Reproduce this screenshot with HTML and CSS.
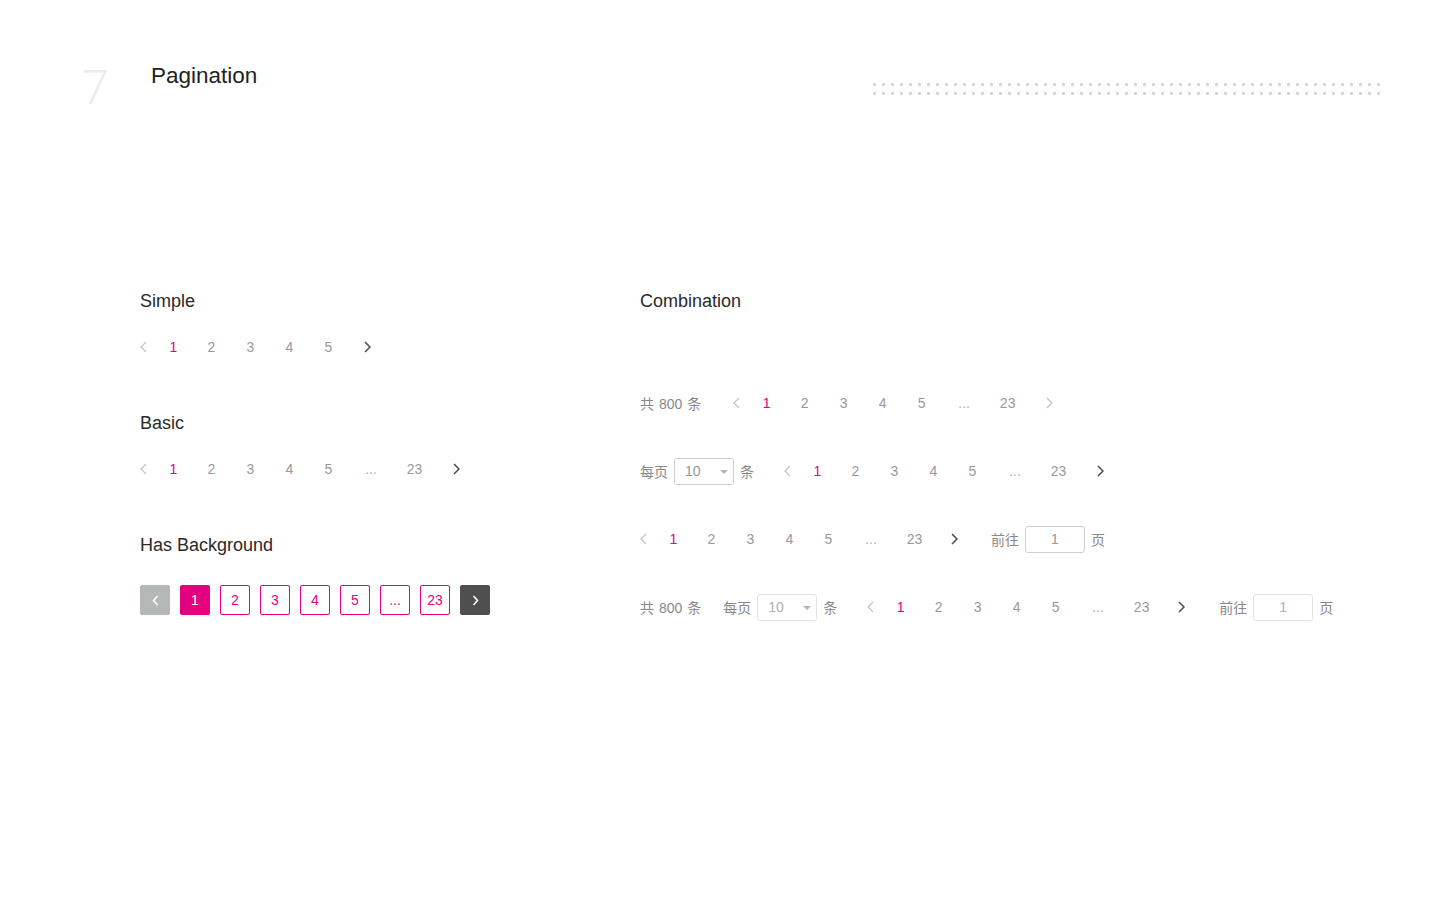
FILE: index.html
```html
<!DOCTYPE html>
<html lang="zh-CN">
<head>
<meta charset="utf-8">
<title>Pagination</title>
<link rel="stylesheet" href="styles.css">
</head>
<body>
<header class="header">
  <div class="chapter">7</div>
  <h1 class="page-title">Pagination</h1>
  <div class="dots"></div>
</header>

<main class="content">
  <section class="col">
    <div class="block">
      <h2 class="section-title">Simple</h2>
      <div class="pager pager-simple">
        <span class="pg-arrow prev"><svg width="7" height="12" viewBox="0 0 7 12"><path d="M6 1 1 6l5 5" fill="none" stroke="currentColor" stroke-width="1.2"/></svg></span>
        <span class="pg-item active">1</span>
        <span class="pg-item">2</span>
        <span class="pg-item">3</span>
        <span class="pg-item">4</span>
        <span class="pg-item">5</span>
        <span class="pg-arrow next"><svg width="7" height="12" viewBox="0 0 7 12"><path d="M1 1l5 5-5 5" fill="none" stroke="currentColor" stroke-width="1.5"/></svg></span>
      </div>
    </div>

    <div class="block">
      <h2 class="section-title">Basic</h2>
      <div class="pager">
        <span class="pg-arrow prev"><svg width="7" height="12" viewBox="0 0 7 12"><path d="M6 1 1 6l5 5" fill="none" stroke="currentColor" stroke-width="1.2"/></svg></span>
        <span class="pg-item active">1</span>
        <span class="pg-item">2</span>
        <span class="pg-item">3</span>
        <span class="pg-item">4</span>
        <span class="pg-item">5</span>
        <span class="pg-item more">...</span>
        <span class="pg-item wide">23</span>
        <span class="pg-arrow next next-wide"><svg width="7" height="12" viewBox="0 0 7 12"><path d="M1 1l5 5-5 5" fill="none" stroke="currentColor" stroke-width="1.5"/></svg></span>
      </div>
    </div>

    <div class="block">
      <h2 class="section-title">Has Background</h2>
      <div class="bg-pager">
        <span class="bg-item bg-prev"><svg width="7" height="11" viewBox="0 0 7 11"><path d="M5.5 1 1.5 5.5l4 4.5" fill="none" stroke="currentColor" stroke-width="1.6"/></svg></span>
        <span class="bg-item bg-active">1</span>
        <span class="bg-item">2</span>
        <span class="bg-item">3</span>
        <span class="bg-item">4</span>
        <span class="bg-item">5</span>
        <span class="bg-item">...</span>
        <span class="bg-item">23</span>
        <span class="bg-item bg-next"><svg width="7" height="11" viewBox="0 0 7 11"><path d="M1.5 1l4 4.5-4 4.5" fill="none" stroke="currentColor" stroke-width="1.6"/></svg></span>
      </div>
    </div>
  </section>

  <section class="col col-right">
    <h2 class="section-title">Combination</h2>

    <div class="combo combo-first">
      <span class="label total">共 800 条</span>
      <div class="pager">
        <span class="pg-arrow prev"><svg width="7" height="12" viewBox="0 0 7 12"><path d="M6 1 1 6l5 5" fill="none" stroke="currentColor" stroke-width="1.2"/></svg></span>
        <span class="pg-item active">1</span>
        <span class="pg-item">2</span>
        <span class="pg-item">3</span>
        <span class="pg-item">4</span>
        <span class="pg-item">5</span>
        <span class="pg-item more">...</span>
        <span class="pg-item wide">23</span>
        <span class="pg-arrow next next-wide next-light"><svg width="7" height="12" viewBox="0 0 7 12"><path d="M1 1l5 5-5 5" fill="none" stroke="currentColor" stroke-width="1.2"/></svg></span>
      </div>
    </div>

    <div class="combo">
      <span class="label">每页</span>
      <span class="select"><span class="select-value">10</span><span class="caret"></span></span>
      <span class="label unit">条</span>
      <div class="pager">
        <span class="pg-arrow prev"><svg width="7" height="12" viewBox="0 0 7 12"><path d="M6 1 1 6l5 5" fill="none" stroke="currentColor" stroke-width="1.2"/></svg></span>
        <span class="pg-item active">1</span>
        <span class="pg-item">2</span>
        <span class="pg-item">3</span>
        <span class="pg-item">4</span>
        <span class="pg-item">5</span>
        <span class="pg-item more">...</span>
        <span class="pg-item wide">23</span>
        <span class="pg-arrow next next-wide"><svg width="7" height="12" viewBox="0 0 7 12"><path d="M1 1l5 5-5 5" fill="none" stroke="currentColor" stroke-width="1.5"/></svg></span>
      </div>
    </div>

    <div class="combo">
      <div class="pager">
        <span class="pg-arrow prev"><svg width="7" height="12" viewBox="0 0 7 12"><path d="M6 1 1 6l5 5" fill="none" stroke="currentColor" stroke-width="1.2"/></svg></span>
        <span class="pg-item active">1</span>
        <span class="pg-item">2</span>
        <span class="pg-item">3</span>
        <span class="pg-item">4</span>
        <span class="pg-item">5</span>
        <span class="pg-item more">...</span>
        <span class="pg-item wide">23</span>
        <span class="pg-arrow next"><svg width="7" height="12" viewBox="0 0 7 12"><path d="M1 1l5 5-5 5" fill="none" stroke="currentColor" stroke-width="1.5"/></svg></span>
      </div>
      <span class="label goto">前往</span>
      <span class="jump">1</span>
      <span class="label page-unit">页</span>
    </div>

    <div class="combo">
      <span class="label total total-full">共 800 条</span>
      <span class="label">每页</span>
      <span class="select select-light"><span class="select-value">10</span><span class="caret"></span></span>
      <span class="label unit">条</span>
      <div class="pager">
        <span class="pg-arrow prev"><svg width="7" height="12" viewBox="0 0 7 12"><path d="M6 1 1 6l5 5" fill="none" stroke="currentColor" stroke-width="1.2"/></svg></span>
        <span class="pg-item active">1</span>
        <span class="pg-item">2</span>
        <span class="pg-item">3</span>
        <span class="pg-item">4</span>
        <span class="pg-item">5</span>
        <span class="pg-item more">...</span>
        <span class="pg-item wide">23</span>
        <span class="pg-arrow next"><svg width="7" height="12" viewBox="0 0 7 12"><path d="M1 1l5 5-5 5" fill="none" stroke="currentColor" stroke-width="1.5"/></svg></span>
      </div>
      <span class="label goto goto-wide">前往</span>
      <span class="jump jump-light">1</span>
      <span class="label page-unit">页</span>
    </div>
  </section>
</main>
</body>
</html>
```

FILE: styles.css
```css
* {
  box-sizing: border-box;
}

html, body {
  margin: 0;
  padding: 0;
  background: #ffffff;
}

body {
  font-family: "Liberation Sans", "Noto Sans CJK SC", sans-serif;
  color: #222222;
  width: 1440px;
  height: 900px;
  overflow: hidden;
}

/* Header */
.header {
  display: flex;
  align-items: flex-start;
  height: 120px;
  padding: 0 57px 0 80px;
}

.chapter {
  width: 71px;
  margin-top: 64px;
  padding-left: 2px;
  font-family: Roboto, "Liberation Sans", sans-serif;
  font-weight: 300;
  font-size: 48px;
  line-height: 48px;
  color: #ececec;
}

.page-title {
  margin: 61px 0 0 0;
  font-weight: 400;
  font-size: 22.5px;
  line-height: 30px;
  color: #222222;
}

.dots {
  margin-left: auto;
  margin-top: 80px;
  width: 513px;
  height: 18px;
  background-image: radial-gradient(circle at 4.5px 4.5px, #d4d4d4 1.3px, rgba(255,255,255,0) 1.7px);
  background-size: 9px 9px;
}

/* Content */
.content {
  display: grid;
  grid-template-columns: 500px 1fr;
  padding: 169px 0 0 140px;
}

.section-title {
  margin: 0;
  font-weight: 400;
  font-size: 18px;
  line-height: 24px;
  color: #2a2a2a;
}

.block {
  display: flex;
  flex-direction: column;
}

.block + .block {
  margin-top: 52px;
}

.block .pager {
  margin-top: 22px;
  height: 24px;
}

.block .bg-pager {
  margin-top: 28px;
}

/* Text pager */
.pager {
  display: flex;
  align-items: center;
  height: 28px;
  font-size: 14px;
  color: #999999;
}

.pg-arrow {
  display: flex;
  align-items: center;
}

.pg-arrow svg {
  display: block;
}

.prev {
  width: 15px;
  justify-content: flex-start;
  color: #c2c2c2;
}

.next {
  width: 39px;
  justify-content: center;
  color: #4a4a4a;
}

.next-wide {
  width: 43px;
}

.next-light {
  color: #c2c2c2;
}

.pg-item {
  width: 39px;
  text-align: center;
  line-height: 20px;
}

.prev + .pg-item {
  width: 37px;
}

.pg-item.active {
  color: #e4007f;
}

.pg-item.more {
  width: 46px;
  color: #b0b0b0;
}

.pg-item.wide {
  width: 41px;
}

/* Background pager */
.bg-pager {
  display: flex;
  gap: 10px;
}

.bg-item {
  display: flex;
  align-items: center;
  justify-content: center;
  width: 30px;
  height: 30px;
  border: 1px solid #e4007f;
  border-radius: 2px;
  font-size: 14px;
  color: #e4007f;
}

.bg-active {
  background: #e4007f;
  color: #ffffff;
}

.bg-prev {
  background: #b4b8b6;
  border-color: #b4b8b6;
  color: #ffffff;
}

.bg-next {
  background: #4f4f4f;
  border-color: #4f4f4f;
  color: #ffffff;
}

/* Combination */
.col-right {
  display: flex;
  flex-direction: column;
}

.combo {
  display: flex;
  align-items: center;
  height: 28px;
  margin-top: 40px;
}

.combo-first {
  margin-top: 76px;
}

.label {
  font-size: 14px;
  color: #888888;
  white-space: nowrap;
}

.total {
  margin-right: 32px;
  word-spacing: 1px;
}

.total-full {
  margin-right: 22px;
}

.select {
  position: relative;
  display: flex;
  align-items: center;
  width: 60px;
  height: 27px;
  margin: 0 6px;
  padding-left: 10px;
  border: 1px solid #cfcfcf;
  border-radius: 3px;
  font-size: 14px;
  color: #999999;
}

.select-light {
  border-color: #e3e3e3;
  color: #b0b0b0;
}

.caret {
  position: absolute;
  right: 5px;
  top: 11px;
  width: 0;
  height: 0;
  border-left: 4px solid transparent;
  border-right: 4px solid transparent;
  border-top: 4px solid #b5b5b5;
}

.unit {
  margin-right: 30px;
}

.goto {
  margin-left: 17px;
}

.goto-wide {
  margin-left: 18px;
}

.jump {
  display: flex;
  align-items: center;
  justify-content: center;
  width: 60px;
  height: 27px;
  margin: 0 6px;
  border: 1px solid #cfcfcf;
  border-radius: 3px;
  font-size: 14px;
  color: #999999;
}

.jump-light {
  border-color: #e3e3e3;
  color: #b0b0b0;
}
```
